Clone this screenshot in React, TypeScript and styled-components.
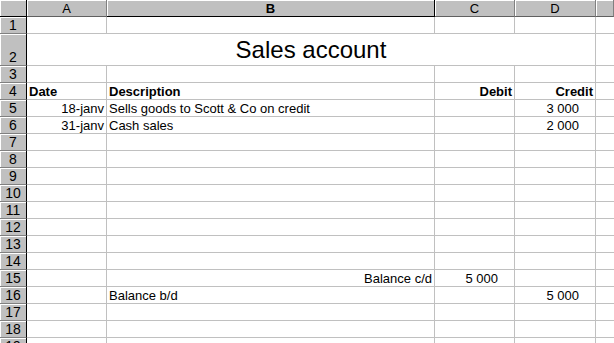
import React from 'react';
import styled, { createGlobalStyle } from 'styled-components';

const GlobalStyle = createGlobalStyle`
  html, body {
    margin: 0;
    padding: 0;
    background: #fff;
    overflow: hidden;
  }
  body {
    font-family: 'Liberation Sans', Arial, sans-serif;
    font-size: 13px;
    color: #000;
  }
`;

const COLUMNS = ['A', 'B', 'C', 'D', ''];
const ACTIVE_COLUMN = 'B';

type Align = 'left' | 'right' | 'center';

interface CellData {
  text: string;
  align?: Align;
  bold?: boolean;
  number?: boolean;
}

type RowData = { [col: string]: CellData };

const rows: RowData[] = [
  {},
  {},
  {},
  {
    A: { text: 'Date', bold: true },
    B: { text: 'Description', bold: true },
    C: { text: 'Debit', bold: true, align: 'right' },
    D: { text: 'Credit', bold: true, align: 'right' },
  },
  {
    A: { text: '18-janv', align: 'right' },
    B: { text: 'Sells goods to Scott & Co on credit' },
    D: { text: '3 000', align: 'right', number: true },
  },
  {
    A: { text: '31-janv', align: 'right' },
    B: { text: 'Cash sales' },
    D: { text: '2 000', align: 'right', number: true },
  },
  {},
  {},
  {},
  {},
  {},
  {},
  {},
  {},
  {
    B: { text: 'Balance c/d', align: 'right' },
    C: { text: '5 000', align: 'right', number: true },
  },
  {
    B: { text: 'Balance b/d' },
    D: { text: '5 000', align: 'right', number: true },
  },
  {},
  {},
  {},
];

export default function App() {
  return (
    <>
      <GlobalStyle />
      <Sheet>
        <Corner />
        {COLUMNS.map((col, i) => (
          <ColHeader key={i} $active={col === ACTIVE_COLUMN}>
            {col}
          </ColHeader>
        ))}

        {rows.map((row, r) => {
          const num = r + 1;
          if (num === 2) {
            return (
              <React.Fragment key={num}>
                <RowHeader>{num}</RowHeader>
                <TitleCell>Sales account</TitleCell>
                <Cell $align='left' $last />
              </React.Fragment>
            );
          }
          return (
            <React.Fragment key={num}>
              <RowHeader>{num}</RowHeader>
              {COLUMNS.map((col, c) => {
                const cell = col ? row[col] : undefined;
                return (
                  <Cell
                    key={c}
                    $align={cell?.align ?? 'left'}
                    $bold={cell?.bold}
                    $number={cell?.number}
                    $last={col === ''}
                  >
                    {cell?.text}
                  </Cell>
                );
              })}
            </React.Fragment>
          );
        })}
      </Sheet>
    </>
  );
}

const Sheet = styled.div`
  display: grid;
  grid-template-columns: 27px 80px 328px 80px 81px 1fr;
  grid-template-rows: 17px 17px 32px repeat(17, 17px);
  width: 614px;
  height: 343px;
  overflow: hidden;
`;

const headerBase = `
  box-sizing: border-box;
  background: #c0c0c0;
  box-shadow: inset 1px 1px 0 #fff;
  display: flex;
  align-items: center;
  justify-content: center;
  font-size: 13px;
  line-height: 15px;
  color: #000;
`;

const Corner = styled.div`
  ${headerBase}
  border-right: 1px solid #000;
  border-bottom: 1px solid #000;
`;

const ColHeader = styled.div<{ $active?: boolean }>`
  ${headerBase}
  border-right: 1px solid ${(p) => (p.$active ? '#000' : '#808080')};
  border-bottom: 1px solid ${(p) => (p.$active ? '#000' : '#606060')};
  font-weight: ${(p) => (p.$active ? 700 : 400)};
  padding-top: 1px;
`;

const RowHeader = styled.div`
  ${headerBase}
  border-right: 1px solid #000;
  border-bottom: 1px solid #808080;
  align-items: flex-end;
  font-size: 14px;
`;

const Cell = styled.div<{ $align: Align; $bold?: boolean; $number?: boolean; $last?: boolean }>`
  box-sizing: border-box;
  border-bottom: 1px solid #c0c0c0;
  border-right: ${(p) => (p.$last ? 'none' : '1px solid #c0c0c0')};
  display: flex;
  align-items: flex-end;
  justify-content: ${(p) =>
    p.$align === 'right' ? 'flex-end' : p.$align === 'center' ? 'center' : 'flex-start'};
  padding: 0 ${(p) => (p.$number ? '16px' : '2px')} 0 2px;
  font-weight: ${(p) => (p.$bold ? 700 : 400)};
  font-size: 13px;
  line-height: 15px;
  white-space: nowrap;
  overflow: visible;
`;

const TitleCell = styled.div`
  grid-column: span 4;
  box-sizing: border-box;
  border-bottom: 1px solid #c0c0c0;
  border-right: 1px solid #c0c0c0;
  display: flex;
  align-items: flex-end;
  justify-content: center;
  font-size: 24px;
  line-height: 28px;
  padding-bottom: 1px;
  white-space: nowrap;
`;
